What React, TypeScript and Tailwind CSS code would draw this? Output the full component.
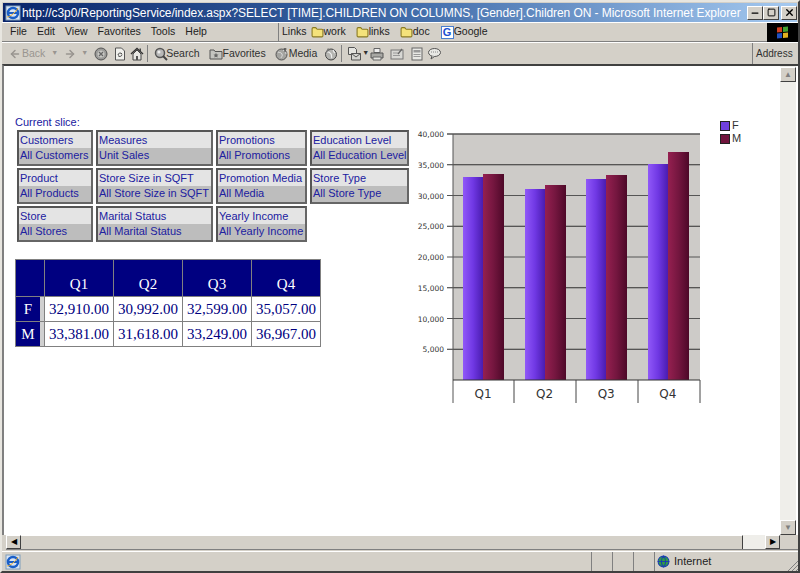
import { Minus, Square, X, ArrowLeft, ArrowRight, Folder, Globe } from "lucide-react";

const SLICES = [
  ["Customers", "All Customers"],
  ["Measures", "Unit Sales"],
  ["Promotions", "All Promotions"],
  ["Education Level", "All Education Level"],
  ["Product", "All Products"],
  ["Store Size in SQFT", "All Store Size in SQFT"],
  ["Promotion Media", "All Media"],
  ["Store Type", "All Store Type"],
  ["Store", "All Stores"],
  ["Marital Status", "All Marital Status"],
  ["Yearly Income", "All Yearly Income"],
];

const ROWS = [
  ["F", "32,910.00", "30,992.00", "32,599.00", "35,057.00"],
  ["M", "33,381.00", "31,618.00", "33,249.00", "36,967.00"],
];

const TICKS = ["40,000", "35,000", "30,000", "25,000", "20,000", "15,000", "10,000", "5,000"];

// bar x and top, in svg coordinates (svg starts at page 410,125)
const BARS = [
  { x: 53, f: 52, m: 49 },
  { x: 115, f: 64, m: 60 },
  { x: 176, f: 54, m: 50 },
  { x: 238, f: 39, m: 27 },
];

function Chart() {
  return (
    <svg width="340" height="285" className="block shrink-0">
      <defs>
        <linearGradient id="fbar" x1="0" x2="1" y1="0" y2="0">
          <stop offset="0" stopColor="#9058f8" />
          <stop offset="0.5" stopColor="#7038e4" />
          <stop offset="1" stopColor="#4a1cb0" />
        </linearGradient>
        <linearGradient id="mbar" x1="0" x2="1" y1="0" y2="0">
          <stop offset="0" stopColor="#952050" />
          <stop offset="0.5" stopColor="#74163f" />
          <stop offset="1" stopColor="#4d0828" />
        </linearGradient>
      </defs>
      <rect x="43" y="9" width="247" height="246" fill="#cdcbc8" />
      {TICKS.map((t, i) => (
        <g key={t}>
          <line x1="37" x2="290" y1={9 + i * 30.75} y2={9 + i * 30.75} stroke={i % 2 ? "#2f2f2f" : "#555555"} strokeWidth={i === 0 ? 1.5 : 1} />
          <text x="34" y={12 + i * 30.75} textAnchor="end" fontSize="7.5" fill="#333333" fontFamily="'DejaVu Sans', sans-serif">
            {t}
          </text>
        </g>
      ))}
      <line x1="43" x2="43" y1="9" y2="278" stroke="#555555" />
      {BARS.map((b) => (
        <g key={b.x}>
          <rect x={b.x} y={b.f} width="20" height={255 - b.f} fill="url(#fbar)" />
          <rect x={b.x + 20} y={b.m} width="21" height={255 - b.m} fill="url(#mbar)" />
        </g>
      ))}
      <line x1="43" x2="290" y1="255" y2="255" stroke="#333333" />
      {["Q1", "Q2", "Q3", "Q4"].map((q, i) => (
        <text key={q} x={73 + i * 61.6} y="273" textAnchor="middle" fontSize="12" fill="#333333" fontFamily="'DejaVu Sans', sans-serif">
          {q}
        </text>
      ))}
      {[104, 166, 228, 290].map((x) => (
        <line key={x} x1={x} x2={x} y1="255" y2="278" stroke="#444444" />
      ))}
    </svg>
  );
}

function IeLogo({ size = 16 }: { size?: number }) {
  return (
    <svg width={size} height={size} viewBox="0 0 16 16" className="shrink-0">
      <rect x="1" y="1" width="14" height="14" fill="#d8e4f4" stroke="#7f9db9" />
      <circle cx="8" cy="8" r="5" fill="none" stroke="#1a5fc8" strokeWidth="2.5" />
      <path d="M3 8h10" stroke="#1a5fc8" strokeWidth="2" />
      <path d="M2 12c3 0 8-4 11-9" stroke="#f0b030" fill="none" />
    </svg>
  );
}

function TitleButton({ children, last }: { children: React.ReactNode; last?: boolean }) {
  return (
    <div className={`w-[16px] h-[14px] shrink-0 bg-[#d4d0c8] border border-t-white border-l-white border-r-[#404040] border-b-[#404040] flex items-center justify-center ${last ? "ml-[2px]" : ""}`}>
      {children}
    </div>
  );
}

function LinkItem({ label }: { label: string }) {
  return (
    <span className="flex items-center">
      <Folder size={13} className="text-[#8a7a20] fill-[#f4e27a]" />
      <span>{label}</span>
    </span>
  );
}

// greyed out toolbar pictures, drawn on a 14x14 grid
function Ico({ children, className }: { children: React.ReactNode; className?: string }) {
  return (
    <svg width="14" height="14" viewBox="0 0 14 14" className={`shrink-0 ${className ?? ""}`}>
      {children}
    </svg>
  );
}

const StopIcon = () => (
  <Ico>
    <circle cx="7" cy="7" r="6" fill="#9a9a98" stroke="#555" />
    <circle cx="7" cy="7" r="3.5" fill="#c8c8c4" />
    <path d="M5 5l4 4M9 5l-4 4" stroke="#666" strokeWidth="1.3" />
  </Ico>
);
const RefreshIcon = () => (
  <Ico>
    <path d="M2.5 1h6l3 3v9h-9z" fill="#f0f0ec" stroke="#555" />
    <path d="M5 8a2.2 2.2 0 0 1 4-1M9 7.5a2.2 2.2 0 0 1-4 1" fill="none" stroke="#444" />
  </Ico>
);
const HomeIcon = () => (
  <Ico>
    <path d="M1 7l6-5.5L13 7" fill="none" stroke="#333" strokeWidth="1.5" />
    <path d="M3 7v6h8V7L7 3z" fill="#e8e8e4" stroke="#444" />
    <rect x="6" y="9" width="2" height="4" fill="#555" />
    <rect x="9.5" y="1.5" width="1.5" height="3" fill="#444" />
  </Ico>
);
const SearchIcon = () => (
  <Ico>
    <circle cx="6" cy="6" r="4.5" fill="#b8b8b8" stroke="#555" strokeWidth="1.5" />
    <circle cx="5" cy="5" r="1.5" fill="#eeeeee" />
    <path d="M9 9l4 4" stroke="#444" strokeWidth="2" />
  </Ico>
);
const FavoritesIcon = () => (
  <Ico>
    <path d="M1 3h4l1 1.5h7V12H1z" fill="#c4c4c0" stroke="#555" />
    <path d="M7 5.8l.8 1.6 1.7.2-1.2 1.2.3 1.7L7 9.7l-1.6.8.3-1.7-1.2-1.2 1.7-.2z" fill="#666" />
  </Ico>
);
const MediaIcon = () => (
  <Ico>
    <circle cx="6.5" cy="7.5" r="5.5" fill="#a4a4a0" stroke="#555" />
    <path d="M3 5c2 1 3 0 4 2s-1 3-1 4M8 3c2 1 3 2 3 4" fill="none" stroke="#ddd" />
    <path d="M10 1v4M8.5 2h3" stroke="#444" />
  </Ico>
);
const HistoryIcon = () => (
  <Ico>
    <circle cx="7" cy="7.5" r="5.5" fill="#b4b4b0" stroke="#444" />
    <path d="M3 5c2-1 3 1 4 2s0 3 1 4M9 3c1 1 0 2 2 3" fill="none" stroke="#eee" strokeWidth="1.2" />
    <path d="M1 6.5L4 1l2 2" fill="#777" />
  </Ico>
);
const MailIcon = () => (
  <Ico>
    <path d="M1.5.5h6l2 2v5h-8z" fill="#e4e4e0" stroke="#555" />
    <path d="M4.5 6.5h9v6.5h-9z" fill="#d4d4d0" stroke="#555" />
    <path d="M4.5 6.5L9 10l4.5-3.5" fill="none" stroke="#555" />
  </Ico>
);
const PrintIcon = () => (
  <Ico>
    <path d="M4 1.5h6v4H4z" fill="#eee" stroke="#666" />
    <path d="M1 6h12v5H1z" fill="#a8a8a4" stroke="#555" />
    <path d="M3 10h8v3H3z" fill="#e4e4e0" stroke="#666" />
  </Ico>
);
const EditIcon = () => (
  <Ico>
    <rect x="1" y="3" width="12" height="9" fill="#d8d8d4" stroke="#777" />
    <path d="M3 6h5M3 8.5h7" stroke="#999" />
    <path d="M8 7l4-5" stroke="#666" strokeWidth="1.3" />
  </Ico>
);
const DocIcon = () => (
  <Ico>
    <rect x="2" y="1" width="10" height="12" fill="#e8e8e4" stroke="#666" />
    <rect x="3.5" y="3" width="7" height="2.5" fill="#999" />
    <path d="M3.5 7.5h7M3.5 9.5h7" stroke="#999" />
  </Ico>
);
const DiscussIcon = () => (
  <Ico>
    <ellipse cx="7.5" cy="5.5" rx="6" ry="4" fill="#e8e8e4" stroke="#555" />
    <path d="M5 9l-1 3 3.5-2.5" fill="#e8e8e4" stroke="#555" />
    <path d="M4 5h7" stroke="#888" strokeDasharray="1 1" />
  </Ico>
);

export default function App() {
  return (
    <div className="w-[800px] h-[573px] overflow-hidden flex flex-col bg-[#d4d0c8] border-2 border-t-[#e8e6e0] border-l-[#e8e6e0] border-r-[#404040] border-b-[#404040] font-['Liberation_Sans',sans-serif] text-[11px] text-[#222222]">
      {/* title bar */}
      <div className="h-[19px] mt-px mx-px shrink-0 flex items-center bg-gradient-to-r from-[#0a246a] via-[#3f6aa8] to-[#a6caf0] text-white pl-[2px] pr-[0px]">
        <IeLogo />
        <span className="ml-[1px] min-w-0 text-[12px] leading-none whitespace-nowrap flex-1 tracking-[-0.07px]">
          http://c3p0/ReportingService/index.aspx?SELECT [TIME].CHILDREN ON COLUMNS, [Gender].Children ON - Microsoft Internet Explorer
        </span>
        <div className="flex shrink-0 text-black">
          <TitleButton><Minus size={10} strokeWidth={3} /></TitleButton>
          <TitleButton><Square size={9} strokeWidth={2.5} /></TitleButton>
          <TitleButton last><X size={11} strokeWidth={3} /></TitleButton>
        </div>
      </div>

      {/* menu bar */}
      <div className="h-[20px] shrink-0 flex items-center border-t border-b border-t-white border-b-[#808080] text-[10.5px]">
        <nav className="w-[276px] flex gap-[10px] pl-[8px]">
          {["File", "Edit", "View", "Favorites", "Tools", "Help"].map((m) => (
            <span key={m}>{m}</span>
          ))}
        </nav>
        <div className="flex-1 h-full flex items-center gap-[10px] border-l border-l-[#808080] pl-[3px]">
          <span className="mr-[-6px]">Links</span>
          <LinkItem label="work" />
          <LinkItem label="links" />
          <LinkItem label="doc" />
          <span className="flex items-center ml-px">
            <span className="w-[13px] h-[13px] border border-[#4a7fd0] bg-white text-[#2050d0] text-[11px] leading-[11px] text-center font-bold">G</span>
            <span>Google</span>
          </span>
        </div>
        <div className="w-[31px] h-[19px] bg-black flex items-center justify-center">
          <div className="grid grid-cols-2 gap-px w-[11px] h-[11px] -skew-y-6">
            <span className="bg-[#d04020]" />
            <span className="bg-[#40a030]" />
            <span className="bg-[#2050c0]" />
            <span className="bg-[#e0b020]" />
          </div>
        </div>
      </div>

      {/* toolbar */}
      <div className="h-[22px] shrink-0 flex items-center border-t border-t-white text-[10.5px] text-[#303030]">
        <div className="flex-1 flex items-center pl-[7px]">
          <ArrowLeft size={12} strokeWidth={3} className="text-[#999590] shrink-0" />
          <span className="ml-px text-[#999590]">Back</span>
          <span className="ml-[6px] text-[7px] text-[#999590]">▼</span>
          <ArrowRight size={12} strokeWidth={3} className="ml-[6px] text-[#999590] shrink-0" />
          <span className="ml-[5px] text-[7px] text-[#999590]">▼</span>
          <span className="ml-[6px]"><StopIcon /></span>
          <span className="ml-[5px]"><RefreshIcon /></span>
          <span className="ml-[3px]"><HomeIcon /></span>
          <span className="w-px h-[17px] bg-[#808080] ml-[3px]" />
          <span className="ml-[6px]"><SearchIcon /></span>
          <span className="-ml-[2px]">Search</span>
          <span className="ml-[9px]"><FavoritesIcon /></span>
          <span>Favorites</span>
          <span className="ml-[9px]"><MediaIcon /></span>
          <span>Media</span>
          <span className="ml-[7px]"><HistoryIcon /></span>
          <span className="w-px h-[17px] bg-[#808080] ml-[3px]" />
          <span className="ml-[5px]"><MailIcon /></span>
          <span className="ml-px text-[7px]">▼</span>
          <span className="ml-px"><PrintIcon /></span>
          <span className="ml-[6px]"><EditIcon /></span>
          <span className="ml-[6px]"><DocIcon /></span>
          <span className="ml-[3px]"><DiscussIcon /></span>
        </div>
        <div className="w-[46px] h-full flex items-center border-l border-l-[#808080] pl-[3px] text-[10px]">Address</div>
      </div>

      {/* page + vertical scrollbar */}
      <div className="flex-1 min-h-0 flex border-t-2 border-l-2 border-t-[#404040] border-l-[#808080] bg-white">
        <main className="flex-1 min-w-0 flex text-[#2020a0]">
          <div className="w-[411px] pt-[49px] pl-[11px] shrink-0">
            <div className="leading-[14px]">Current slice:</div>
            <div className="grid grid-cols-[76px_117px_91px_99px] gap-x-[3px] gap-y-[2px] ml-[2px] mt-[1px]">
              {SLICES.map(([name, value]) => (
                <div key={name} className="h-[36px] border-2 border-t-[#555555] border-l-[#555555] border-r-[#666666] border-b-[#666666] flex flex-col whitespace-nowrap leading-[15px]">
                  <div className="flex-1 bg-[#e4e4e4] pl-[1px] pt-px">{name}</div>
                  <div className="h-[16px] bg-[#bdbdbd] pl-[1px]">{value}</div>
                </div>
              ))}
            </div>
            <table className="mt-[17px] w-[306px] border-collapse font-['Liberation_Serif',serif] text-[15px] table-fixed">
              <thead>
                <tr className="h-[37px] bg-[#000080] text-white">
                  <th className="w-[29px] border border-[#808080]" />
                  {["Q1", "Q2", "Q3", "Q4"].map((q) => (
                    <th key={q} className="border border-[#808080] font-normal align-bottom pb-[1px]">{q}</th>
                  ))}
                </tr>
              </thead>
              <tbody>
                {ROWS.map(([label, ...values]) => (
                  <tr key={label} className="h-[25px] text-[#000080]">
                    <td className="border border-[#808080] p-0 bg-[#d0d0d0]">
                      <div className="w-[24px] h-[24px] bg-[#000080] text-white text-center leading-[24px]">{label}</div>
                    </td>
                    {values.map((v) => (
                      <td key={v} className="border border-[#808080] text-center p-0">{v}</td>
                    ))}
                  </tr>
                ))}
              </tbody>
            </table>
          </div>
          <div className="flex-1 flex pt-[59px] -ml-[5px]">
            <Chart />
            <div className="-ml-[30px] -mt-[6px] text-[#333333] leading-[13px]">
              {[
                ["F", "bg-[#7040e0]"],
                ["M", "bg-[#70143c]"],
              ].map(([label, color]) => (
                <div key={label} className="flex items-center gap-[2px]">
                  <span className={`w-[10px] h-[10px] border border-[#222222] ${color}`} />
                  <span>{label}</span>
                </div>
              ))}
            </div>
          </div>
        </main>
        <div className="w-[16px] shrink-0 flex flex-col bg-[#efeeea] mr-[2px]">
          <div className="h-[15px] mt-px bg-[#d4d0c8] border border-t-white border-l-white border-r-[#404040] border-b-[#404040] flex items-center justify-center text-[#808080] text-[8px]">▲</div>
          <div className="flex-1" />
          <div className="h-[15px] bg-[#d4d0c8] border border-t-white border-l-white border-r-[#404040] border-b-[#404040] flex items-center justify-center text-[#808080] text-[8px]">▼</div>
        </div>
      </div>

      {/* horizontal scrollbar */}
      <div className="h-[15px] shrink-0 flex bg-[#d4d0c8] border-b border-b-[#808080] ml-[4px] text-[8px] text-black">
        <div className="w-[15px] border border-t-white border-l-white border-r-[#404040] border-b-[#404040] flex items-center justify-center">◀</div>
        <div className="w-[722px] border-t border-t-white border-r border-r-[#404040]" />
        <div className="w-[22px] bg-[#efeeea]" />
        <div className="w-[15px] border border-t-white border-l-white border-r-[#404040] border-b-[#404040] flex items-center justify-center">▶</div>
      </div>

      {/* status bar */}
      <div className="h-[20px] shrink-0 mt-[1px] flex items-center border-t border-t-white text-[11px]">
        <div className="pl-[3px] flex-1"><IeLogo /></div>
        <div className="w-[21px] h-full border-l border-l-[#808080]" />
        <div className="w-[21px] h-full border-l border-l-[#808080]" />
        <div className="w-[21px] h-full border-l border-l-[#808080]" />
        <div className="w-[144px] h-full border-l border-l-[#808080] flex items-center pl-[2px] gap-[4px]">
          <Globe size={13} className="text-[#1a3fb0] fill-[#30a040]" />
          <span>Internet</span>
          <svg width="12" height="12" viewBox="0 0 12 12" className="ml-auto mt-[6px]">
            <path d="M2 12L12 2M6 12l6-6M10 12l2-2" stroke="#808080" />
          </svg>
        </div>
      </div>
    </div>
  );
}
